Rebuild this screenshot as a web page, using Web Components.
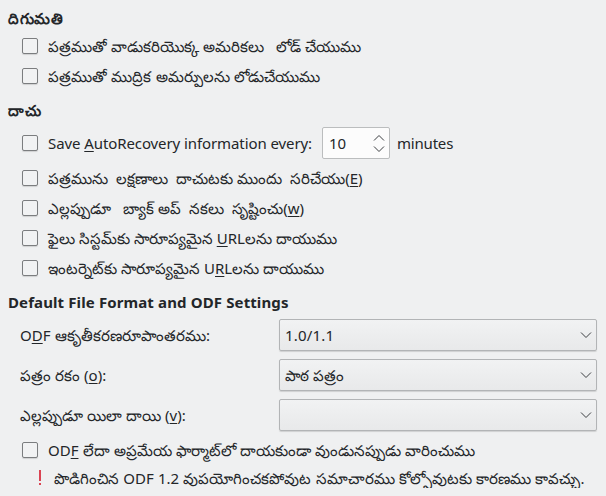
<!DOCTYPE html>
<html lang="te">
<head>
<meta charset="utf-8">
<title>Load / Save</title>
<style>
html, body { margin: 0; height: 100%; overflow: hidden; background: #eff0f1; }
body { font: 15px/22px "Noto Sans", sans-serif; color: #232629; word-spacing: .12px; }
u { text-decoration: underline; text-decoration-thickness: 1px; text-underline-offset: 2px; text-decoration-skip-ink: none; }
</style>
</head>
<body>
<settings-page>
  <settings-group style="--h:24px;--gap:0px">
    <span slot="title" style="letter-spacing:.6px">దిగుమతి</span>
    <check-row>పత్రముతో వాడుకరియొక్క అమరికలు   లోడ్ చేయుము</check-row>
    <check-row style="word-spacing:.4px">పత్రముతో ముద్రిక అమర్పులను లోడుచేయుము</check-row>
  </settings-group>
  <settings-group style="--h:36px">
    <span slot="title" style="letter-spacing:.9px">దాచు</span>
    <check-row style="--row:32px;margin-bottom:4px"><span style="letter-spacing:-.1px">Save <u>A</u>utoRecovery information every:</span><spin-box slot="extra" style="margin-left:10px">10</spin-box><span slot="extra" style="letter-spacing:-.2px;margin-left:7px">minutes</span></check-row>
    <check-row>పత్రమును  లక్షణాలు  దాచుటకు ముందు  సరిచేయు(<u>E</u>)</check-row>
    <check-row>ఎల్లప్పుడూ   బ్యాక్ అప్  నకలు  సృష్టించు(<u>w</u>)</check-row>
    <check-row style="word-spacing:0">ఫైలు సిస్టమ్‌కు సారూప్యమైన <u>U</u>RLలను దాయుము</check-row>
    <check-row>ఇంటర్నెట్‌కు సారూప్యమైన U<u>R</u>Lలను దాయుము</check-row>
  </settings-group>
  <settings-group style="--h:36px">
    <span slot="title" style="letter-spacing:.1px">Default File Format and ODF Settings</span>
    <combo-row><span slot="label" style="word-spacing:.6px">O<u>D</u>F ఆకృతీకరణరూపాంతరము:</span><span style="letter-spacing:.2px">1.0/1.1</span></combo-row>
    <combo-row><span slot="label">పత్రం రకం (<u>o</u>):</span>పాఠ పత్రం</combo-row>
    <combo-row><span slot="label">ఎల్లప్పుడూ యిలా దాయి (<u>v</u>):</span></combo-row>
    <check-row style="margin-top:-4px;word-spacing:.2px">OD<u>F</u> లేదా అప్రమేయ ఫార్మాట్‌లో దాయకుండా వుండునప్పుడు వారించుము</check-row>
    <warning-row style="word-spacing:.35px">పొడిగించిన ODF 1.2 వుపయోగించకపోవుట సమాచారము కోల్పోవుటకు కారణము కావచ్చు.</warning-row>
  </settings-group>
</settings-page>
<script>
const define = (name, html) => customElements.define(name, class extends HTMLElement {
  constructor() {
    super();
    this.attachShadow({ mode: 'open' }).innerHTML = html;
  }
});

define('settings-page', `
<style>:host { display: flex; flex-direction: column; padding: 7px 9px 0 8px; }</style>
<slot></slot>`);

define('settings-group', `
<style>
:host { display: block; }
.title { display: flex; align-items: center; height: var(--h); font-weight: 700; padding: var(--gap, 4px) 0 2px; box-sizing: border-box; }
.rows { display: flex; flex-direction: column; }
</style>
<div class="title"><slot name="title"></slot></div>
<div class="rows"><slot></slot></div>`);

define('check-row', `
<style>
:host { display: flex; align-items: center; height: var(--row, 30px); padding-left: 14px; white-space: pre; }
.box { box-sizing: border-box; width: 16px; height: 16px; border: 1px solid #7b7d7f; border-radius: 2px; background: #f1f2f3; box-shadow: 0 1px 1px #0002; margin-right: 10px; }
::slotted([slot=extra]) { margin-left: 8px; }
</style>
<span class="box"></span><span class="text"><slot></slot></span><slot name="extra"></slot>`);

define('spin-box', `
<style>
:host { display: flex; align-items: center; justify-content: space-between; box-sizing: border-box; width: 68px; height: 32px; padding: 0 4px 0 6px; background: #fcfcfc; border: 1px solid #bbbdbe; border-radius: 2px; }
svg { display: block; }
</style>
<slot></slot>
<svg width="12" height="20" viewBox="0 0 12 20" fill="none" stroke="#3b3e41"><path d="M1 7.5l5-5 5 5M1 13.5l5 5 5-5"/></svg>`);

define('combo-row', `
<style>
:host { display: grid; grid-template-columns: 259px 318px; height: 32px; margin: 0 0 8px 12px; align-items: center; white-space: pre; }
.combo { display: flex; align-items: center; justify-content: space-between; box-sizing: border-box; height: 32px; padding: 0 4px 0 5px; border: 1px solid #b2b4b6; border-radius: 2px; background: linear-gradient(#f1f2f3, #e8e9ea); box-shadow: 0 1px 1px #0002; }
</style>
<slot name="label"></slot>
<div class="combo"><span><slot></slot></span><svg width="12" height="8" viewBox="0 0 12 8" fill="none" stroke="#3b3e41"><path d="M1 1.5l5 5 5-5"/></svg></div>`);

define('warning-row', `
<style>
:host { display: flex; align-items: flex-start; height: 23px; overflow: hidden; padding-left: 30px; white-space: pre; line-height: 26px; }
svg { margin: 5px 12px 0 0; flex: none; }
</style>
<svg width="4" height="17" viewBox="0 0 4 17" fill="#da4453"><path d="M1 0h2v11H1zM1 13h2v2H1z"/></svg><span><slot></slot></span>`);
</script>
</body>
</html>
